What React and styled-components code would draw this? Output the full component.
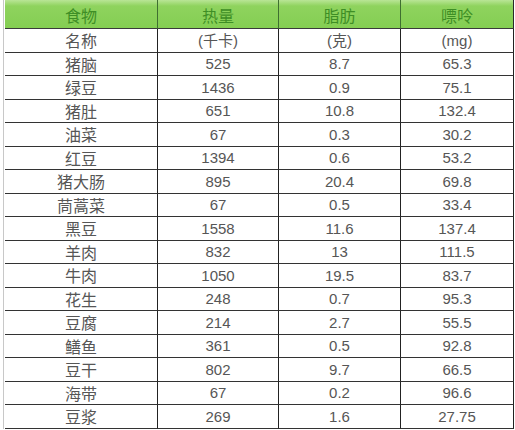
import React from 'react';
import styled, { createGlobalStyle } from 'styled-components';

const GlobalStyle = createGlobalStyle`
  html, body {
    margin: 0;
    padding: 0;
    background: #fff;
  }
`;

const rows = [
  ['名称', '(千卡)', '(克)', '(mg)'],
  ['猪脑', '525', '8.7', '65.3'],
  ['绿豆', '1436', '0.9', '75.1'],
  ['猪肚', '651', '10.8', '132.4'],
  ['油菜', '67', '0.3', '30.2'],
  ['红豆', '1394', '0.6', '53.2'],
  ['猪大肠', '895', '20.4', '69.8'],
  ['茼蒿菜', '67', '0.5', '33.4'],
  ['黑豆', '1558', '11.6', '137.4'],
  ['羊肉', '832', '13', '111.5'],
  ['牛肉', '1050', '19.5', '83.7'],
  ['花生', '248', '0.7', '95.3'],
  ['豆腐', '214', '2.7', '55.5'],
  ['鳝鱼', '361', '0.5', '92.8'],
  ['豆干', '802', '9.7', '66.5'],
  ['海带', '67', '0.2', '96.6'],
  ['豆浆', '269', '1.6', '27.75'],
];

const headers = ['食物', '热量', '脂肪', '嘌呤'];

const App = () => (
  <>
    <GlobalStyle />
    <Page>
      <Table>
        {headers.map((h, i) => (
          <HeadCell key={h} $last={i === 3}>{h}</HeadCell>
        ))}
        {rows.map((r) =>
          r.map((c, i) => (
            <Cell key={r[0] + i} $cjk={i === 0}>{c}</Cell>
          ))
        )}
      </Table>
    </Page>
  </>
);

const Page = styled.div`
  width: 515px;
  height: 430px;
  box-sizing: border-box;
  padding-left: 3px;
  overflow: hidden;
`;

const Table = styled.div`
  display: grid;
  grid-template-columns: 153px 121px 122px 113px;
  grid-template-rows: 29px repeat(17, 23.5px);
  border-left: 1px solid #c8c8c8;
  padding-left: 1px;
  width: 511px;
  font-family: "Liberation Sans", "Noto Sans CJK SC", sans-serif;
`;

const HeadCell = styled.div`
  display: flex;
  align-items: center;
  justify-content: center;
  background: linear-gradient(#b9e596 0, #8fd35e 6px, #84ce52 100%);
  color: #3e8e25;
  font-family: "Noto Sans CJK SC", sans-serif;
  font-size: 16px;
  border-bottom: 1px solid #3a3a3a;
  border-right: 1px solid ${(p) => (p.$last ? '#2a2a2a' : '#3f6f30')};
  padding-top: 1px;
`;

const Cell = styled.div`
  display: flex;
  align-items: center;
  justify-content: center;
  color: #565656;
  font-size: ${(p) => (p.$cjk ? '16px' : '15px')};
  font-family: ${(p) =>
    p.$cjk ? '"Noto Sans CJK SC", sans-serif' : '"Liberation Sans", "Noto Sans CJK SC", sans-serif'};
  border-bottom: 1px solid #333;
  border-right: 1px solid #222;
  line-height: 1;
`;

export default App;
